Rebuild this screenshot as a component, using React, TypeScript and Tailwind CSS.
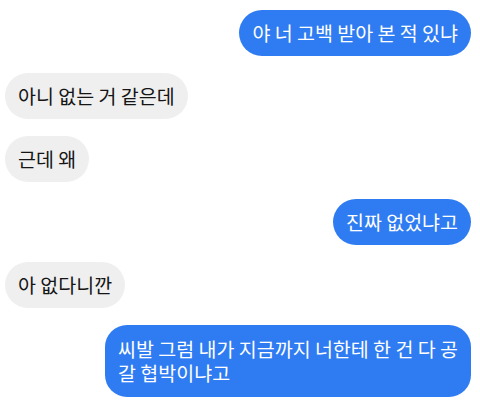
import React from 'react'

type Msg = { me: boolean; lines: string[] }

const messages: Msg[] = [
  { me: true, lines: ['야 너 고백 받아 본 적 있냐'] },
  { me: false, lines: ['아니 없는 거 같은데'] },
  { me: false, lines: ['근데 왜'] },
  { me: true, lines: ['진짜 없었냐고'] },
  { me: false, lines: ['아 없다니깐'] },
  { me: true, lines: ['씨발 그럼 내가 지금까지 너한테 한 건 다 공', '갈 협박이냐고'] },
]

function Bubble({ msg }: { msg: Msg }) {
  const multi = msg.lines.length > 1
  return (
    <div className={`flex ${msg.me ? 'justify-end' : 'justify-start'}`}>
      <div
        className={`px-[13px] text-[19.5px] leading-[24px] whitespace-nowrap ${
          multi ? 'rounded-[22px] py-[12px]' : 'rounded-full h-[46px] flex items-center'
        } ${msg.me ? 'bg-[#2f7cf2] text-white' : 'bg-[#efefef] text-[#151515]'}`}
      >
        <div>
          {msg.lines.map((l, i) => (
            <div key={i}>{l}</div>
          ))}
        </div>
      </div>
    </div>
  )
}

export default function App() {
  return (
    <div
      className="w-[480px] h-[406px] bg-white overflow-hidden pl-[5px] pr-[9px] pt-[10px] flex flex-col gap-[17px]"
      style={{ fontFamily: '"Noto Sans CJK KR", "Noto Sans", sans-serif' }}
    >
      {messages.map((m, i) => (
        <Bubble key={i} msg={m} />
      ))}
    </div>
  )
}
